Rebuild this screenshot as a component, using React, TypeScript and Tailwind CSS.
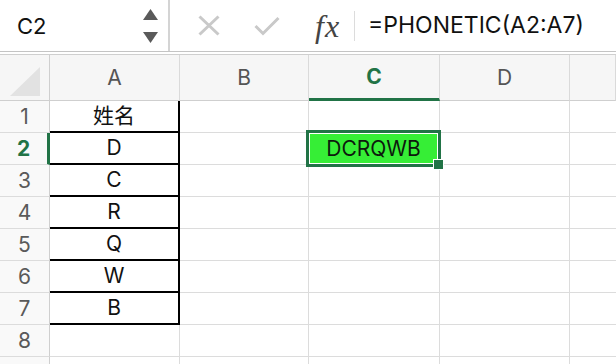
import React from "react";

const FONT = 'Inter, "Noto Sans CJK SC", "Liberation Sans", sans-serif';

const cols = ["A", "B", "C", "D", ""];
const rows: { n: number; a: string; label: string }[] = [
  { n: 1, a: "姓名", label: "1" },
  { n: 2, a: "D", label: "2" },
  { n: 3, a: "C", label: "3" },
  { n: 4, a: "R", label: "4" },
  { n: 5, a: "Q", label: "5" },
  { n: 6, a: "W", label: "6" },
  { n: 7, a: "B", label: "7" },
  { n: 8, a: "", label: "8" },
  { n: 9, a: "", label: "" },
];

export default function App() {
  return (
    <div
      className="w-[616px] h-[364px] overflow-hidden bg-white text-[#111]"
      style={{ fontFamily: FONT }}
    >
      {/* Formula bar */}
      <div className="flex h-[52px] border-b border-[#c4c4c4]">
        <div className="w-[170px] flex items-center border-r-2 border-[#d4d4d4] pl-[17px] pr-[10px]">
          <span className="flex-1 text-[22px] leading-none">C2</span>
          <div className="flex flex-col gap-[12px]">
            <svg width="15" height="11" viewBox="0 0 15 11">
              <polygon points="7.5,0 15,11 0,11" fill="#5a5a5a" />
            </svg>
            <svg width="15" height="11" viewBox="0 0 15 11">
              <polygon points="0,0 15,0 7.5,11" fill="#5a5a5a" />
            </svg>
          </div>
        </div>
        <div className="flex flex-1 items-center">
          <svg className="ml-[28px]" width="22" height="21" viewBox="0 0 22 21">
            <path d="M1.5 1.5 L20.5 19.5 M20.5 1.5 L1.5 19.5" stroke="#c9c9c9" strokeWidth="3" fill="none" />
          </svg>
          <svg className="ml-[34px]" width="26" height="20" viewBox="0 0 26 20">
            <path d="M1.5 10 L9 17.5 L24.5 2" stroke="#c9c9c9" strokeWidth="3" fill="none" />
          </svg>
          <span
            className="ml-[35px] text-[32px] italic leading-none text-[#444] tracking-[1px]"
            style={{ fontFamily: '"Liberation Serif", serif' }}
          >
            fx
          </span>
          <div className="ml-[14px] w-px h-[30px] bg-[#dcdcdc]" />
          <span className="ml-[13px] text-[23px] leading-none text-[#111]">=PHONETIC(A2:A7)</span>
        </div>
      </div>
      <div className="h-[2px]" />

      {/* Grid */}
      <div className="grid grid-cols-[50px_130px_129px_131px_130px_1fr] border-t border-[#cfcfcf]">
        {/* Header row */}
        <div className="h-[46px] bg-[#f6f6f6] border-r border-b border-[#cfcfcf] flex items-end justify-center pb-[4px]">
          <svg width="30" height="29" viewBox="0 0 30 29">
            <polygon points="30,0 30,29 0,29" fill="#e2e2e2" />
          </svg>
        </div>
        {cols.map((c) => (
          <div
            key={c || "e"}
            className={
              "h-[46px] bg-[#f6f6f6] flex items-center justify-center text-[21px] " +
              (c === "C"
                ? "border-b-[3px] border-b-[#217346] border-r border-r-[#dadada] text-[#217346] font-bold"
                : "border-b border-b-[#cfcfcf] border-r border-r-[#dadada] text-[#555]")
            }
          >
            {c}
          </div>
        ))}

        {/* Body rows */}
        {rows.map((r) => (
          <React.Fragment key={r.n}>
            <div
              className={
                "h-[32px] bg-[#f9f9f9] border-b border-b-[#dcdcdc] flex items-center justify-center text-[21px] " +
                (r.n === 2
                  ? "border-r-[3px] border-r-[#217346] text-[#217346] font-bold"
                  : "border-r border-r-[#cfcfcf] text-[#5a5a5a]")
              }
            >
              {r.label}
            </div>
            <div
              className={
                "h-[32px] flex items-center justify-center text-[21px] " +
                (r.n <= 7
                  ? "border-r-2 border-b-2 border-black"
                  : "border-r border-b border-[#dcdcdc]")
              }
            >
              {r.a}
            </div>
            <div className="h-[32px] border-r border-b border-[#dcdcdc]" />
            <div className="h-[32px] border-r border-b border-[#dcdcdc] relative">
              {r.n === 2 && (
                <>
                  <div className="absolute left-[-3px] top-[-3px] w-[135px] h-[37px] z-10 border-[3px] border-[#217346] bg-white p-[1px]">
                    <div className="w-full h-full bg-[#36ee36] flex items-center justify-center text-[21px] text-[#0d1a0d]">
                      DCRQWB
                    </div>
                  </div>
                  <div className="absolute left-[124px] top-[26px] w-[11px] h-[11px] z-20 bg-[#217346] border border-white" />
                </>
              )}
            </div>
            <div className="h-[32px] border-r border-b border-[#dcdcdc]" />
            <div className="h-[32px] border-b border-[#dcdcdc]" />
          </React.Fragment>
        ))}
      </div>
    </div>
  );
}
